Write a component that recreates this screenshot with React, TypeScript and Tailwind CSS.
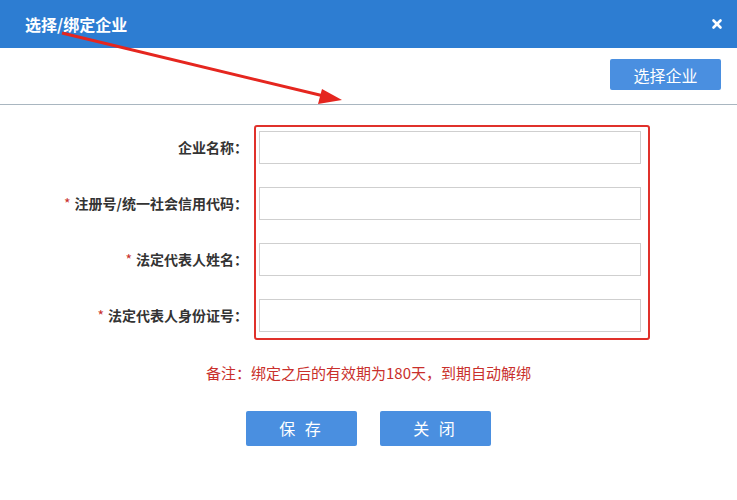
import { X } from 'lucide-react';

const fields = [
  { label: '企业名称：', required: false },
  { label: '注册号/统一社会信用代码：', required: true },
  { label: '法定代表人姓名：', required: true },
  { label: '法定代表人身份证号：', required: true },
];

export default function App() {
  return (
    <div
      className="relative w-[737px] h-[500px] overflow-hidden bg-white"
      style={{ fontFamily: '"Microsoft YaHei", "Noto Sans CJK SC", sans-serif' }}
    >
      {/* Title bar */}
      <div className="flex items-center justify-between h-[48px] pl-[25px] pr-[13px] bg-[#2d7dd2]">
        <span className="text-white text-[16px] font-bold">选择/绑定企业</span>
        <X className="w-[14px] h-[14px] text-white" strokeWidth={4.5} />
      </div>

      {/* Toolbar */}
      <div className="flex justify-end items-start h-[57px] pt-[11px] pr-[16px] border-b border-[#a9b6c0]">
        <button className="w-[111px] h-[31px] rounded-[2px] bg-[#4a8fe0] text-white text-[16px]">
          选择企业
        </button>
      </div>

      {/* Form */}
      <div className="flex mt-[20px]">
        <div className="flex flex-col items-end w-[254px] pt-[6px] pr-[6px] gap-[23px]">
          {fields.map((f) => (
            <div
              key={f.label}
              className="h-[33px] flex items-center text-[14px] font-bold text-[#333]"
            >
              {f.required && <span className="text-[#c9302c] mr-[4px] font-normal">*</span>}
              {f.label}
            </div>
          ))}
        </div>
        <div className="w-[396px] border-[2.5px] border-[#e0312b] rounded-[3px] pt-[4px] pb-[6px] pl-[3px] pr-[7px] flex flex-col gap-[23px]">
          {fields.map((f) => (
            <input
              key={f.label}
              className="h-[33px] w-full border border-[#cfcfcf] bg-white outline-none"
            />
          ))}
        </div>
      </div>

      {/* Note */}
      <div className="mt-[22px] text-center text-[15px] text-[#c9302c]">
        备注：绑定之后的有效期为180天，到期自动解绑
      </div>

      {/* Actions */}
      <div className="flex justify-center gap-[23px] mt-[26px]">
        <button className="w-[111px] h-[35px] rounded-[2px] bg-[#4a8fe0] text-white text-[16px] tracking-[3px]">
          保 存
        </button>
        <button className="w-[111px] h-[35px] rounded-[2px] bg-[#4a8fe0] text-white text-[16px] tracking-[3px]">
          关 闭
        </button>
      </div>

      {/* Annotation arrow */}
      <svg className="absolute left-0 top-0 pointer-events-none" width="737" height="500">
        <line x1="62" y1="33" x2="328" y2="97" stroke="#e5261f" strokeWidth="3" />
        <polygon points="342,100 322,89 318,104" fill="#e5261f" />
      </svg>
    </div>
  );
}
